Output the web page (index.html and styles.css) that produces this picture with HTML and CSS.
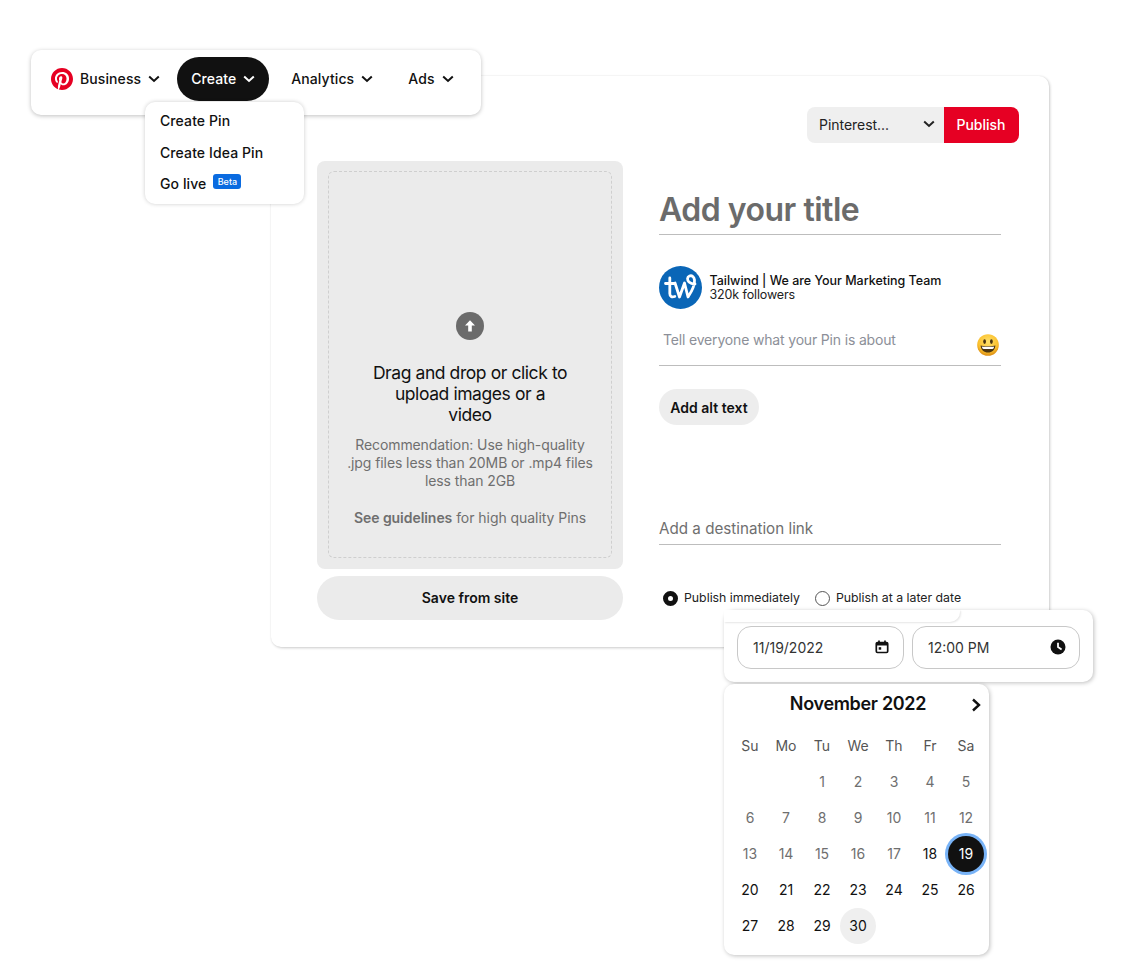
FILE: index.html
```html
<!DOCTYPE html>
<html lang="en">
<head>
<meta charset="utf-8">
<title>Pinterest scheduling</title>
<link rel="stylesheet" href="styles.css">
</head>
<body>
<main class="canvas">
  <section class="card">
    <div class="toolbar">
      <div class="board-select"><span>Pinterest...</span><svg class="chev" viewBox="0 0 12 8"><path d="M1.2 1.5 6 6l4.8-4.5"/></svg></div>
      <button class="publish">Publish</button>
    </div>
    <div class="columns">
      <div class="left">
        <div class="upload">
          <div class="dashed">
            <span class="up-icon"><svg viewBox="0 0 28 28"><circle cx="14" cy="14" r="14" fill="#6b6b6b"/><path d="M14 8.2 19 13.6h-3.2V19.5h-3.6V13.6H9z" fill="#fff"/></svg></span>
            <p class="drag">Drag and drop or click to<br>upload images or a<br>video</p>
            <p class="rec">Recommendation: Use high-quality<br>.jpg files less than 20MB or .mp4 files<br>less than 2GB</p>
            <p class="guide"><b>See guidelines</b> for high quality Pins</p>
          </div>
        </div>
        <button class="save">Save from site</button>
      </div>
      <div class="right">
        <h1 class="title">Add your title</h1>
        <div class="account">
          <svg class="avatar" viewBox="0 0 43 43"><circle cx="21.5" cy="21.5" r="21.5" fill="#0a66b7"/><path d="M6.5 17.5h9M10.8 12v15.500c0 3 2 4 5 3M16 17l4.500 14 5-14 3.500 14c4-6 7-12 6.500-17-.4-3-2.500-5-5-4-2.500 1-2.500 4-.5 6 1.500 1.500 3.500 2 6 2" fill="none" stroke="#fff" stroke-width="2.800" stroke-linecap="round" stroke-linejoin="round"/></svg>
          <div class="acc-text"><div class="acc-name">Tailwind | We are Your Marketing Team</div><div class="acc-foll">320k followers</div></div>
        </div>
        <div class="about">
          <span>Tell everyone what your Pin is about</span>
          <svg class="emoji" viewBox="0 0 22 22"><defs><radialGradient id="em" cx="50%" cy="35%" r="65%"><stop offset="0" stop-color="#ffe169"/><stop offset=".7" stop-color="#fbc02d"/><stop offset="1" stop-color="#d98a10"/></radialGradient></defs><circle cx="11" cy="11" r="10.8" fill="url(#em)"/><ellipse cx="7.6" cy="7.6" rx="1.4" ry="2.3" fill="#4a3410"/><ellipse cx="14.4" cy="7.6" rx="1.4" ry="2.3" fill="#4a3410"/><path d="M3.6 11.5c2 1 12.8 1 14.8 0-.3 4.500-3.500 7-7.400 7s-7.100-2.500-7.400-7z" fill="#4a3410"/><path d="M4.800 12.400c2.500.6 9.900.6 12.400 0-.2 1-.5 1.700-1 2.300-2.500.5-7.900.5-10.400 0-.5-.6-.8-1.300-1-2.300z" fill="#fff"/></svg>
        </div>
        <button class="alt">Add alt text</button>
        <div class="dest">Add a destination link</div>
        <div class="radios">
          <span class="radio-item"><span class="radio on"></span>Publish immediately</span>
          <span class="radio-item"><span class="radio"></span>Publish at a later date</span>
        </div>
      </div>
    </div>
  </section>

  <nav class="nav">
    <svg class="logo" viewBox="0 0 24 24"><circle cx="12" cy="12" r="11.500" fill="#fff"/><path fill="#e60023" d="M12 0C5.373 0 0 5.372 0 12c0 5.084 3.163 9.426 7.627 11.174-.105-.949-.2-2.405.042-3.441.218-.937 1.407-5.965 1.407-5.965s-.359-.719-.359-1.782c0-1.668.967-2.914 2.171-2.914 1.023 0 1.518.769 1.518 1.690 0 1.029-.655 2.568-.994 3.995-.283 1.194.599 2.169 1.777 2.169 2.133 0 3.772-2.249 3.772-5.495 0-2.873-2.064-4.882-5.012-4.882-3.414 0-5.418 2.561-5.418 5.207 0 1.031.397 2.138.893 2.738a.36.36 0 0 1 .083.345l-.333 1.360c-.053.22-.174.267-.402.161-1.499-.698-2.436-2.889-2.436-4.649 0-3.785 2.750-7.262 7.929-7.262 4.163 0 7.398 2.967 7.398 6.931 0 4.136-2.607 7.464-6.227 7.464-1.216 0-2.359-.631-2.750-1.378l-.748 2.853c-.271 1.043-1.002 2.350-1.492 3.146C9.570 23.812 10.763 24 12 24c6.627 0 12-5.373 12-12S18.627 0 12 0z"/></svg>
    <span class="nav-item first">Business<svg class="chev" viewBox="0 0 12 8"><path d="M1.2 1.500 6 6l4.800-4.500"/></svg></span>
    <span class="nav-item active">Create<svg class="chev" viewBox="0 0 12 8"><path d="M1.200 1.500 6 6l4.800-4.500"/></svg></span>
    <span class="nav-item analytics">Analytics<svg class="chev" viewBox="0 0 12 8"><path d="M1.200 1.500 6 6l4.800-4.500"/></svg></span>
    <span class="nav-item ads">Ads<svg class="chev" viewBox="0 0 12 8"><path d="M1.200 1.500 6 6l4.800-4.500"/></svg></span>
  </nav>

  <div class="menu">
    <div class="menu-item">Create Pin</div>
    <div class="menu-item">Create Idea Pin</div>
    <div class="menu-item">Go live<span class="beta">Beta</span></div>
  </div>

  <div class="datetime">
    <div class="field date"><span>11/19/2022</span>
      <svg class="field-icon" viewBox="0 0 14 14"><path d="M2.500 2.500h9a1.200 1.200 0 0 1 1.200 1.200v7.600a1.200 1.200 0 0 1-1.200 1.200h-9a1.200 1.200 0 0 1-1.200-1.200V3.700a1.200 1.200 0 0 1 1.200-1.200z" fill="none" stroke="#111" stroke-width="1.700"/><path d="M1.500 3h11v2.500h-11z" fill="#111"/><path d="M4 .6v2.500M10 .6v2.500" stroke="#111" stroke-width="1.700"/><rect x="3.700" y="7.200" width="2.500" height="2.500" fill="#111"/></svg>
    </div>
    <div class="field"><span>12:00 PM</span>
      <svg class="field-icon clock" viewBox="0 0 16 16"><circle cx="8" cy="8" r="7.500" fill="#111"/><path d="M8 3.800V8l3.600 2.400" fill="none" stroke="#fff" stroke-width="1.800"/></svg>
    </div>
  </div>
  <div class="strip"></div>

  <div class="calendar">
    <div class="cal-head"><span class="cal-month">November 2022</span><svg class="cal-next" viewBox="0 0 10 14"><path d="M2 1.500 8 7l-6 5.500" fill="none" stroke="#111" stroke-width="2.400"/></svg></div>
    <div class="cal-grid">
      <span class="dow">Su</span><span class="dow">Mo</span><span class="dow">Tu</span><span class="dow">We</span><span class="dow">Th</span><span class="dow">Fr</span><span class="dow">Sa</span>
      <span></span><span></span><span class="past">1</span><span class="past">2</span><span class="past">3</span><span class="past">4</span><span class="past">5</span>
      <span class="past">6</span><span class="past">7</span><span class="past">8</span><span class="past">9</span><span class="past">10</span><span class="past">11</span><span class="past">12</span>
      <span class="past">13</span><span class="past">14</span><span class="past">15</span><span class="past">16</span><span class="past">17</span><span>18</span><span class="selected">19</span>
      <span>20</span><span>21</span><span>22</span><span>23</span><span>24</span><span>25</span><span>26</span>
      <span>27</span><span>28</span><span>29</span><span class="hover">30</span><span></span><span></span><span></span>
    </div>
  </div>
</main>
</body>
</html>
```
FILE: styles.css
```css
* { box-sizing: border-box; }
html, body { margin: 0; background: #fff; }
body { font-family: Inter, "Liberation Sans", sans-serif; color: #111; }
p, h1 { margin: 0; }
button { font: inherit; border: 0; cursor: pointer; }
.canvas { position: relative; width: 1126px; height: 970px; overflow: hidden; }

/* Floating windows */
.card { position: absolute; left: 271px; top: 76px; width: 778px; height: 571px; background: #fff; border-radius: 10px; padding: 31px 30px 0 46px; box-shadow: 1px 1px 3px rgba(0,0,0,.2), 0 0 2px rgba(0,0,0,.06); }
.nav { position: absolute; left: 31px; top: 50px; width: 450px; height: 65px; background: #fff; border-radius: 10px; display: flex; align-items: center; padding: 7px 0 14px 20px; box-shadow: 0 1px 4px rgba(0,0,0,.25); }
.menu { position: absolute; left: 145px; top: 102px; width: 159px; height: 102px; background: #fff; border-radius: 10px; padding: 2px 15px 0; box-shadow: 0 0 4px rgba(0,0,0,.2); }
.strip { position: absolute; left: 724px; top: 610px; width: 236px; height: 12px; background: #fff; border-radius: 0 0 10px 0; box-shadow: 1px 1px 2px rgba(0,0,0,.1); }
.datetime { position: absolute; left: 724px; top: 610px; width: 369px; height: 72px; background: #fff; border-radius: 10px; padding: 16px 13px 0; display: flex; gap: 8px; box-shadow: 1px 1px 4px rgba(0,0,0,.25); }
.calendar { position: absolute; left: 724px; top: 684px; width: 265px; height: 271px; background: #fff; border-radius: 10px; box-shadow: 1px 1px 4px rgba(0,0,0,.25); padding: 0 8px; }

/* Toolbar */
.toolbar { display: flex; justify-content: flex-end; }
.board-select { width: 137px; height: 36px; background: #efefef; border-radius: 8px 0 0 8px; display: flex; align-items: center; justify-content: space-between; padding: 0 9px 2px 12px; font-size: 14px; color: #222; letter-spacing: -.03px; }
.chev { width: 12px; height: 8px; fill: none; stroke: currentColor; stroke-width: 2; flex: none; }
.publish { width: 75px; height: 36px; background: #e60023; color: #fff; font-size: 14px; font-weight: 500; border-radius: 0 8px 8px 0; padding: 0 1px 2px 0; }

.columns { display: flex; gap: 36px; margin-top: 18px; }
.left { width: 306px; }
.right { width: 342px; }

/* Upload */
.upload { height: 408px; background: #ebebeb; border-radius: 8px; padding: 10px 11px; }
.dashed { height: 387px; border: 1px dashed #cfcfcf; border-radius: 6px; display: flex; flex-direction: column; align-items: center; text-align: center; padding-top: 140px; }
.up-icon { width: 28px; height: 28px; display: block; }
.up-icon svg { display: block; width: 28px; height: 28px; }
.drag { font-size: 17.500px; line-height: 21px; margin-top: 22px; color: #111; letter-spacing: -.42px; }
.rec { font-size: 14px; line-height: 18px; color: #6f6f6f; margin-top: 11px; letter-spacing: -.09px; }
.guide { font-size: 14px; line-height: 18px; color: #6f6f6f; margin-top: 19px; letter-spacing: -.05px; }
.guide b { font-weight: 600; }
.save { display: block; width: 306px; height: 44px; border-radius: 22px; background: #ebebeb; font-size: 14px; font-weight: 600; margin-top: 7px; color: #111; padding: 0 0 2px; }

/* Right column */
.title { font-size: 32px; line-height: 40px; font-weight: 600; color: #6b6b6b; height: 74px; padding-top: 29px; padding-bottom: 4px; border-bottom: 1px solid #bdbdbd; letter-spacing: -.5px; }
.account { display: flex; align-items: center; gap: 8px; margin-top: 31px; }
.avatar { width: 43px; height: 43px; flex: none; margin-right: -.5px; }
.acc-name { font-size: 12.500px; line-height: 15px; font-weight: 500; color: #111; letter-spacing: -.02px; }
.acc-foll { font-size: 12.500px; line-height: 15px; color: #222; letter-spacing: -.12px; margin-top: -.5px; }
.about { height: 57px; border-bottom: 1px solid #bdbdbd; position: relative; padding: 21px 0 0 4px; font-size: 14px; line-height: 20px; color: #8c8f98; letter-spacing: -.17px; }
.emoji { position: absolute; right: 2px; top: 25px; width: 22px; height: 22px; }
.alt { display: block; width: 100px; height: 36px; border-radius: 18px; background: #ededed; font-size: 14px; font-weight: 600; color: #111; margin-top: 23px; padding: 0; }
.dest { height: 38px; margin-top: 82px; border-bottom: 1px solid #bdbdbd; font-size: 15.200px; line-height: 20px; color: #6f6f6f; padding-top: 12px; }
.radios { display: flex; gap: 15px; margin-top: 43px; padding-left: 4px; font-size: 12.300px; line-height: 20px; color: #222; }
.radio-item { display: inline-flex; align-items: center; gap: 6px; }
.radio { width: 15px; height: 15px; border: 1px solid #555; border-radius: 50%; flex: none; }
.radio.on { border: 5px solid #111; }

/* Nav */
.logo { width: 22px; height: 22px; flex: none; }
.nav-item { display: inline-flex; align-items: center; gap: 7px; font-size: 14px; font-weight: 500; color: #111; letter-spacing: .1px; padding-bottom: 2px; }
.nav-item .chev { margin-top: 2px; }
.nav-item.first { margin-left: 7px; }
.nav-item.active { background: #111; color: #fff; height: 44px; width: 92px; border-radius: 22px; justify-content: center; margin-left: 17px; }
.analytics { margin-left: 22px; }
.ads { margin-left: 35px; }

/* Menu */
.menu-item { height: 32px; display: flex; align-items: center; font-size: 14px; font-weight: 500; color: #111; letter-spacing: .1px; }
.menu-item:nth-child(3) { height: 30px; }
.beta { background: #0a6be0; color: #fff; font-size: 9px; font-weight: 500; width: 28px; height: 15px; border-radius: 3px; display: inline-flex; align-items: center; justify-content: center; margin-left: 7px; position: relative; top: -2px; letter-spacing: 0; }

/* Date and time */
.field { flex: 1; height: 43px; border: 1px solid #c8c8c8; border-radius: 14px; display: flex; align-items: center; justify-content: space-between; padding: 0 13px 0 15px; font-size: 14px; color: #333; }
.field.date { flex: none; width: 167px; padding-right: 14px; }
.field-icon { width: 14px; height: 14px; flex: none; margin-top: -2px; }
.field-icon.clock { width: 16px; height: 16px; }

/* Calendar */
.cal-head { height: 44px; display: flex; align-items: center; justify-content: center; position: relative; }
.cal-month { font-size: 18px; font-weight: 600; margin: -6px 0 0 3px; letter-spacing: -.32px; }
.cal-next { position: absolute; right: 0; top: 14px; width: 10px; height: 14px; }
.cal-grid { display: grid; grid-template-columns: repeat(7, 36px); grid-auto-rows: 36px; font-size: 14px; }
.cal-grid span { display: flex; align-items: center; justify-content: center; color: #111; border-radius: 50%; padding-bottom: 2px; }
.cal-grid .dow { color: #555; }
.cal-grid .past { color: #6f6f6f; }
.cal-grid .selected { background: #111; color: #fff; box-shadow: 0 0 0 3px #78b3f7; }
.cal-grid .hover { background: #efefef; }
```
